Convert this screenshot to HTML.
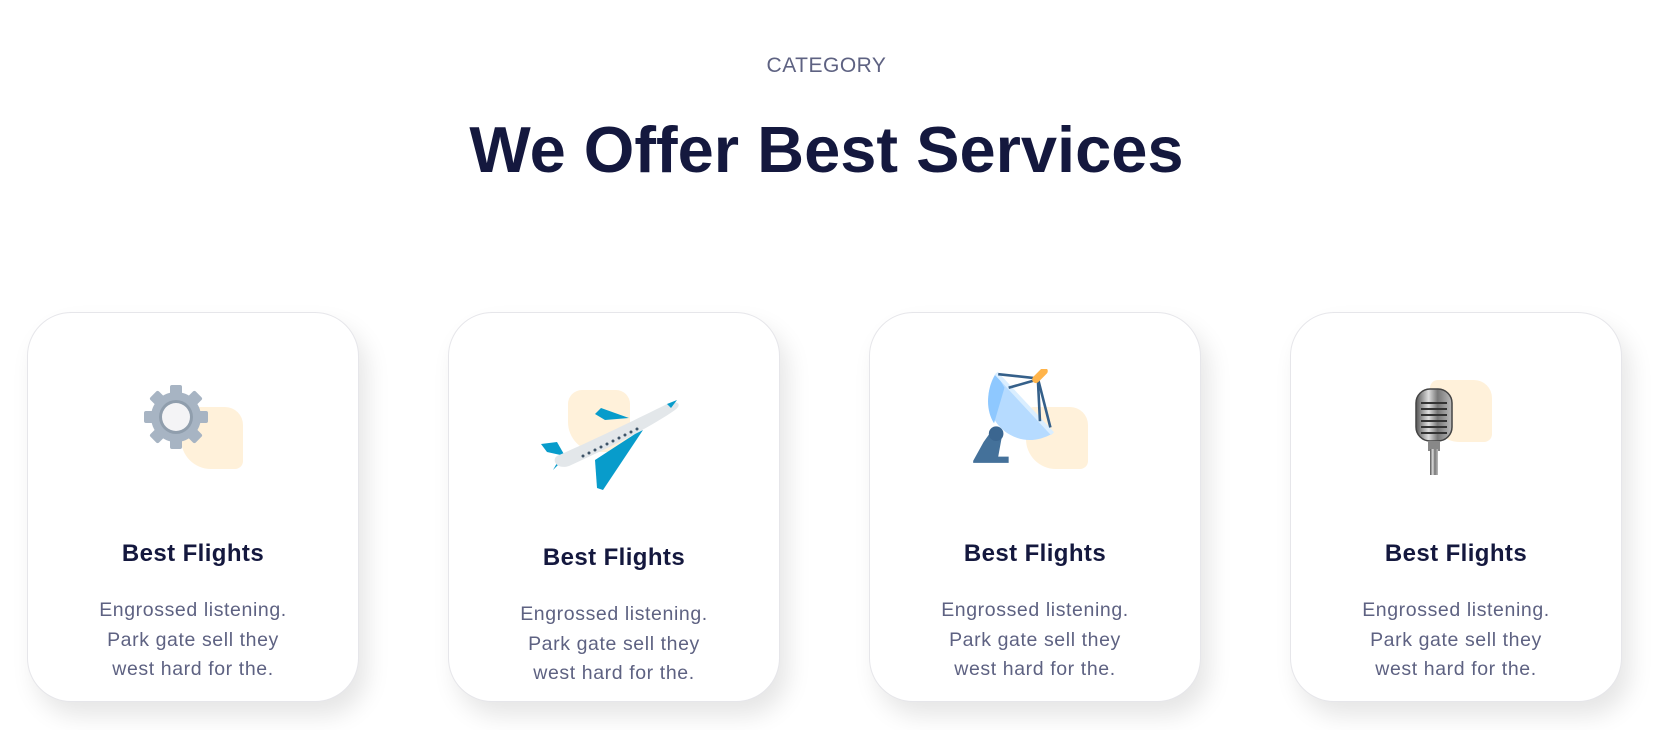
<!DOCTYPE html>
<html><head><style>
body{margin:0;width:1653px;height:730px;background:#fff;font-family:"Liberation Sans",sans-serif;overflow:hidden;position:relative}
.cap{position:absolute;top:54px;left:0;width:1653px;text-align:center;font-size:21px;color:#5e6282;letter-spacing:.5px}
h1{position:absolute;top:112px;left:0;width:1653px;margin:0;text-align:center;font-size:65px;font-weight:bold;color:#14183e}
.card{position:absolute;top:312px;width:332px;height:390px;border:1px solid #e6e6ea;border-radius:44px;background:#fff;box-shadow:8px 14px 24px rgba(0,0,0,.10);box-sizing:border-box}
.t{position:absolute;left:0;width:100%;text-align:center;top:227px;font-size:24px;font-weight:bold;color:#14183e;letter-spacing:.4px}
.d{position:absolute;left:0;width:100%;text-align:center;top:283px;font-size:19.5px;line-height:29.5px;color:#5e6282;letter-spacing:.6px}
.pe{position:absolute;width:62px;height:62px;background:#fff1da;border-radius:8px 18px 8px 30px}
</style></head><body>
<div class="cap">CATEGORY</div>
<h1>We Offer Best Services</h1>

<div class="card" style="left:27px"><div class="t">Best Flights</div><div class="d">Engrossed listening.<br>Park gate sell they<br>west hard for the.</div></div>
<div class="card" style="left:448px"><div class="t" style="top:231px">Best Flights</div><div class="d" style="top:287px">Engrossed listening.<br>Park gate sell they<br>west hard for the.</div></div>
<div class="card" style="left:869px"><div class="t">Best Flights</div><div class="d">Engrossed listening.<br>Park gate sell they<br>west hard for the.</div></div>
<div class="card" style="left:1290px"><div class="t">Best Flights</div><div class="d">Engrossed listening.<br>Park gate sell they<br>west hard for the.</div></div>

<div class="pe" style="left:181px;top:407px"></div>
<div class="pe" style="left:568px;top:390px;border-radius:14px 14px 8px 30px"></div>
<div class="pe" style="left:1026px;top:407px"></div>
<div class="pe" style="left:1430px;top:380px"></div>

<!-- gear -->
<svg style="position:absolute;left:143px;top:384px" width="66" height="66" viewBox="-33 -33 66 66">
<g fill="#a7b4c3">
<rect x="-6" y="-32" width="12" height="64" rx="2"/>
<rect x="-6" y="-32" width="12" height="64" rx="2" transform="rotate(45)"/>
<rect x="-6" y="-32" width="12" height="64" rx="2" transform="rotate(90)"/>
<rect x="-6" y="-32" width="12" height="64" rx="2" transform="rotate(135)"/>
<circle r="25"/></g>
<circle r="17" fill="#909ead"/><circle r="14" fill="#f4f4f6"/>
</svg>

<!-- plane -->
<svg style="position:absolute;left:539px;top:398px" width="142" height="92" viewBox="0 0 142 92">
<path d="M66 22 L56 16 L62 10 L90 20Z" fill="#089ccb"/>
<path d="M2 46 L18 44 L26 58 L8 54Z" fill="#089ccb"/>
<path d="M14 72 L30 56 L22 58Z" fill="#089ccb"/>
<path d="M18 58 C50 44 96 22 128 6 C138 2 144 6 136 12 C110 30 74 48 30 68 C18 72 12 62 18 58Z" fill="#e3e7ea"/>
<path d="M78 50 C90 46 96 52 84 56Z" fill="#cfd5da"/>
<path d="M56 62 L96 36 L104 32 L64 92 L58 90Z" fill="#089ccb"/>
<path d="M128 6 L138 2 L132 10Z" fill="#089ccb"/>
<g fill="#3e5468"><circle cx="44" cy="58" r="1.5"/><circle cx="50" cy="55" r="1.5"/><circle cx="56" cy="52" r="1.5"/><circle cx="62" cy="49" r="1.5"/><circle cx="68" cy="46" r="1.5"/><circle cx="74" cy="43" r="1.5"/><circle cx="80" cy="40" r="1.5"/><circle cx="86" cy="37" r="1.5"/><circle cx="92" cy="34" r="1.5"/><circle cx="98" cy="31" r="1.5"/></g>
</svg>

<!-- dish -->
<svg style="position:absolute;left:971px;top:369px" width="92" height="96" viewBox="0 0 88 92">
<path d="M2 88 L12 70 L22 56 L30 62 L26 84 L36 84 L36 90 L2 90Z" fill="#44719a"/>
<circle cx="24" cy="62" r="7" fill="#3b6690"/>
<path d="M24 4 C10 24 16 56 44 66 C56 70 66 68 78 62Z" fill="#b6dbff"/>
<path d="M24 4 C14 20 14 40 22 52 L32 18Z" fill="#8ec8ff"/>
<path d="M24 4 L78 62" stroke="#daeeff" stroke-width="4"/>
<g stroke="#35608a" stroke-width="2.5" fill="none"><path d="M26 5 L64 9 L76 56"/><path d="M36 18 L64 10 L66 50"/></g>
<path d="M62 10 L70 2" stroke="#ffb44a" stroke-width="7" stroke-linecap="round"/>
</svg>

<!-- mic -->
<svg style="position:absolute;left:1412px;top:387px" width="44" height="90" viewBox="0 0 44 90">
<defs><linearGradient id="m" x1="0" x2="1"><stop offset="0" stop-color="#555"/><stop offset=".35" stop-color="#ddd"/><stop offset=".6" stop-color="#777"/><stop offset="1" stop-color="#bbb"/></linearGradient></defs>
<rect x="4" y="2" width="36" height="52" rx="14" fill="url(#m)" stroke="#444" stroke-width="1.5"/>
<g stroke="#333" stroke-width="2"><path d="M9 16 H35 M9 22 H35 M9 28 H35 M9 34 H35 M9 40 H35 M9 46 H35"/></g>
<rect x="16" y="54" width="12" height="10" fill="#888"/>
<rect x="18" y="62" width="8" height="26" fill="url(#m)"/>
</svg>
</body></html>
